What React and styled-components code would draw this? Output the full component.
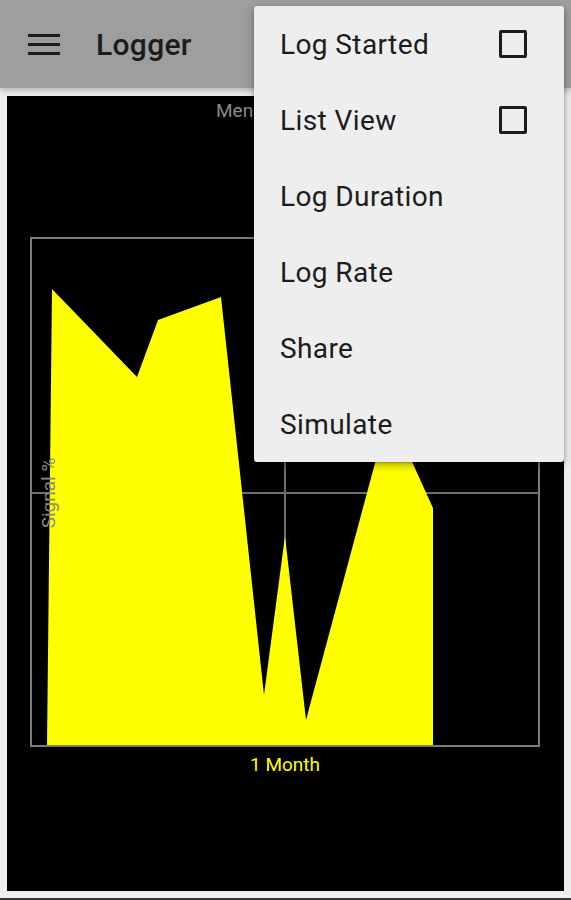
import React from 'react';
import styled, { createGlobalStyle } from 'styled-components';

const GlobalStyle = createGlobalStyle`
  html, body {
    margin: 0;
    padding: 0;
    background: #eeeeee;
    font-family: Roboto, "Liberation Sans", sans-serif;
  }
  #root {
    height: 900px;
  }
`;

const Screen = styled.div`
  position: relative;
  height: 900px;
  display: flex;
  flex-direction: column;
  background: #eeeeee;
  border-bottom: 2px solid #3a3a3a;
  box-sizing: border-box;
  overflow: hidden;
`;

const Toolbar = styled.header`
  position: relative;
  z-index: 1;
  height: 88px;
  flex: none;
  display: flex;
  align-items: center;
  background: #9e9e9e;
  box-shadow: 0 2px 6px rgba(0, 0, 0, 0.28);
`;

const MenuButton = styled.button`
  width: 32px;
  height: 21px;
  margin: 0 36px 0 28px;
  padding: 0;
  border: none;
  background: none;
  display: flex;
  flex-direction: column;
  justify-content: space-between;
  span {
    display: block;
    height: 3px;
    background: #1c1c1c;
  }
`;

const Title = styled.h1`
  margin: 0;
  font-size: 30px;
  font-weight: 500;
  color: #1c1c1c;
  letter-spacing: 0.3px;
`;

const Content = styled.main`
  flex: 1;
  display: flex;
  padding: 8px 7px 7px 7px;
`;

const ChartPanel = styled.section`
  flex: 1;
  background: #000;
  display: flex;
`;

const ChartSvg = styled.svg`
  display: block;
  width: 557px;
  height: 795px;
  font-family: Roboto, "Liberation Sans", sans-serif;
`;

const Popup = styled.ul`
  position: absolute;
  z-index: 2;
  top: 6px;
  left: 254px;
  width: 310px;
  margin: 0;
  padding: 0;
  list-style: none;
  background: #eeeeee;
  border-radius: 3px;
  box-shadow: 0 3px 8px rgba(0, 0, 0, 0.35), 0 1px 2px rgba(0, 0, 0, 0.2);
`;

const Item = styled.li`
  height: 76px;
  display: flex;
  align-items: center;
  justify-content: space-between;
  padding: 0 37px 0 26px;
  font-size: 28px;
  letter-spacing: 0.4px;
  color: #1c1c1c;
`;

const Check = styled.span`
  width: 22px;
  height: 22px;
  border: 3px solid #1c1c1c;
  border-radius: 2px;
`;

const items = [
  { label: 'Log Started', check: true },
  { label: 'List View', check: true },
  { label: 'Log Duration' },
  { label: 'Log Rate' },
  { label: 'Share' },
  { label: 'Simulate' },
];

const points =
  '40,650 45,193 130,281 151,224 214,201 257,599 278,440 299,624 382,315 426,412 426,650';

const Chart = () => (
  <ChartSvg viewBox="0 0 557 795">
    <text x="209" y="21" fill="#8a8a8a" fontSize="19">Menu Signal</text>
    <line x1="278" y1="142" x2="278" y2="650" stroke="#6e6e6e" strokeWidth="2" />
    <line x1="24" y1="397" x2="532" y2="397" stroke="#6e6e6e" strokeWidth="2" />
    <polygon points={points} fill="#ffff00" />
    <rect x="24" y="142" width="508" height="508" fill="none" stroke="#7a7a7a" strokeWidth="2" />
    <text
      x="0"
      y="0"
      fill="#8a8a8a"
      fontSize="19"
      textAnchor="middle"
      transform="translate(48 397) rotate(-90)"
    >
      Signal %
    </text>
    <text x="278" y="675" fill="#ffff00" fontSize="19" textAnchor="middle">1 Month</text>
  </ChartSvg>
);

export default function App() {
  return (
    <Screen>
      <GlobalStyle />
      <Toolbar>
        <MenuButton aria-label="menu">
          <span />
          <span />
          <span />
        </MenuButton>
        <Title>Logger</Title>
      </Toolbar>
      <Content>
        <ChartPanel>
          <Chart />
        </ChartPanel>
      </Content>
      <Popup>
        {items.map((it) => (
          <Item key={it.label}>
            {it.label}
            {it.check && <Check />}
          </Item>
        ))}
      </Popup>
    </Screen>
  );
}
